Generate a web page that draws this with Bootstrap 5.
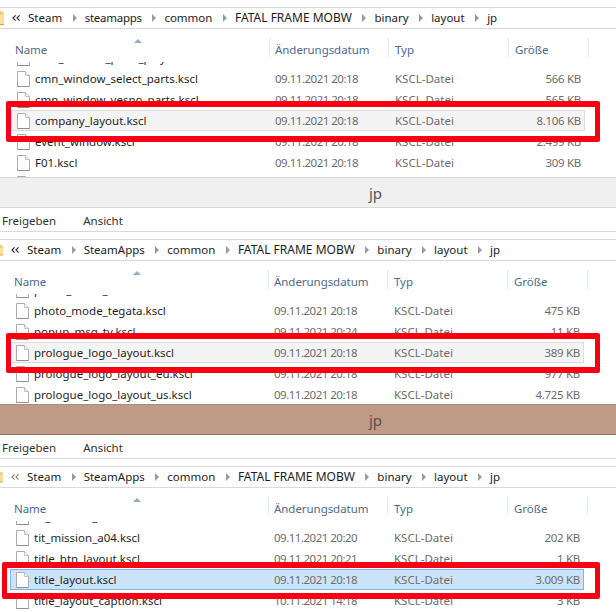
<!DOCTYPE html>
<html lang="de"><head><meta charset="utf-8">
<link href="https://cdn.jsdelivr.net/npm/bootstrap@5.3.0/dist/css/bootstrap.min.css" rel="stylesheet">
<style>
html,body{margin:0;background:#fff}
body{width:616px;height:612px;overflow:hidden;font-family:"Noto Sans","Open Sans",sans-serif;font-size:11.5px;color:#1f1f1f;line-height:1;position:relative}
.win{position:relative}
.gap7{height:7px}
.sep{height:1px;background:#d9d9d9}
.crumbs{height:20px}
.crumb{font-size:11.5px;color:#1c1c1c;white-space:nowrap}
.crumb-wide{font-size:12px}
.crumb-tight{letter-spacing:-.25px}
.folder{width:4px;height:14px;margin-right:8px;flex:none}
.dbl{width:8px;height:6px;margin-right:8px;flex:none;stroke:#333;fill:none;stroke-width:1.2}
.p3 .dbl{stroke:#8a8a8a}
.chev{width:4px;height:8px;margin:0 8px 0 10.5px;flex:none;fill:#9b9b9b}
.headrow{height:33px;position:relative}
.hd{position:absolute;top:21px;color:#4f6a8c;transform:translateY(-50%);letter-spacing:-.05px}
.hd1{left:15px}.hd2{left:275px}.hd3{left:395px}.hd4{left:515px}
.sepv{position:absolute;top:8px;height:21px;width:1px;background:linear-gradient(#e9eff6,#d9e4ef 50%,#f0f4f9)}
.sv1{left:269px}.sv2{left:388px}.sv3{left:508px}.sv4{left:588px}
.sorter{position:absolute;top:10px;left:134px;width:8px;height:4px;fill:#93accb}
.listarea{overflow:hidden;position:relative}
.a1{height:115px}.a2{height:110px}.a3{height:91px}
.frow{height:21px;position:relative;margin:0 31px 0 11px;border:1px solid transparent;color:#6d6d6d;white-space:nowrap}
.frow:first-child{margin-top:-15px}
.frow>span{position:absolute;top:50%;transform:translateY(-50%)}
.ico{position:absolute;left:5px;top:2px;width:13px;height:16px;display:block}
.frow .nm{left:23px;color:#1f1f1f}
.frow .dt{left:263px;letter-spacing:-.5px}
.frow .ty{left:383px}
.frow .sz{right:3px;letter-spacing:-.3px}
.frow.hot{background:#f4f4f4;border-color:#dcdcdc}
.frow.sel{background:#cce4fa;border-color:#7eb4ea}
.p2 .frow,.p3 .frow{margin-left:10px;margin-right:32px}
.p2 .headrow,.p3 .headrow{margin-left:-1px}
.p2 .crumbs,.p3 .crumbs{margin-left:-1px}
.p2 .folder,.p3 .folder{margin-left:1px;width:3px}
.band{height:30px;background:#f0f0f0;color:#555;font-size:15px;position:relative;border-top:1px solid #d6d6d6}
.band.brown{background:#bf9a87;color:#5a5048;border-top:1px solid #ad8b7a;border-bottom:1px solid #8f7262;height:31px}
.band span{position:absolute;left:369px;top:50%;transform:translateY(-50%)}
.tools{height:23px;color:#333;padding:2px 0 0 2px;gap:27px}
.redbox{position:absolute;border:solid #f70014;border-width:6px 5px;border-radius:2px}
.r1{left:6px;top:101px;width:594px;height:41px}
.r2{left:6px;top:333px;width:594px;height:40px}
.r3{left:2px;top:562px;width:598px;height:37px}
</style></head><body>
<svg width="0" height="0" class="position-absolute"><defs>
<symbol id="fi" viewBox="0 0 13 16"><path d="M.5.5h8l4 4v11H.5z" fill="#fff" stroke="#adadad"/><path d="M8.5.5v4h4" fill="#f0f0f0" stroke="#c2c2c2"/><path d="M.5 15.5h12" stroke="#8f8f8f"/></symbol>
<symbol id="ch" viewBox="0 0 4 8"><path d="M0 0l4 4-4 4z"/></symbol>
<symbol id="fo" viewBox="0 0 4 14"><path d="M0 0h2l2 2v12H0z" fill="#f0d27a"/><path d="M0 4h4v10H0z" fill="#f6e09a"/><path d="M0 13.5h4" stroke="#c9a548"/></symbol>
<symbol id="dbl" viewBox="0 0 8 6"><path d="M3.6.4 1 3l2.6 2.6M7.6.4 5 3l2.6 2.6"/></symbol>
</defs></svg>

<section class="win p1">
 <div class="gap7"></div><div class="sep"></div>
 <nav class="crumbs d-flex align-items-center">
  <svg class="folder"><use href="#fo"/></svg><svg class="dbl"><use href="#dbl"/></svg>
  <span class="crumb">Steam</span><svg class="chev"><use href="#ch"/></svg><span class="crumb crumb-tight">steamapps</span><svg class="chev"><use href="#ch"/></svg><span class="crumb">common</span><svg class="chev"><use href="#ch"/></svg><span class="crumb crumb-wide">FATAL FRAME MOBW</span><svg class="chev"><use href="#ch"/></svg><span class="crumb">binary</span><svg class="chev"><use href="#ch"/></svg><span class="crumb">layout</span><svg class="chev"><use href="#ch"/></svg><span class="crumb">jp</span>
 </nav>
 <div class="sep"></div>
 <div class="headrow">
  <svg class="sorter"><path d="M0 4l4-4 4 4z"/></svg>
  <span class="hd hd1">Name</span><i class="sepv sv1"></i>
  <span class="hd hd2">Änderungsdatum</span><i class="sepv sv2"></i>
  <span class="hd hd3">Typ</span><i class="sepv sv3"></i>
  <span class="hd hd4">Größe</span><i class="sepv sv4"></i>
 </div>
 <div class="listarea a1">
  <div class="frow"><svg class="ico"><use href="#fi"/></svg><span class="nm">cmn_window_parts_play.kscl</span></div>
  <div class="frow"><svg class="ico"><use href="#fi"/></svg><span class="nm">cmn_window_select_parts.kscl</span><span class="dt">09.11.2021 20:18</span><span class="ty">KSCL-Datei</span><span class="sz">566 KB</span></div>
  <div class="frow"><svg class="ico"><use href="#fi"/></svg><span class="nm">cmn_window_yesno_parts.kscl</span><span class="dt">09.11.2021 20:18</span><span class="ty">KSCL-Datei</span><span class="sz">565 KB</span></div>
  <div class="frow hot"><svg class="ico"><use href="#fi"/></svg><span class="nm">company_layout.kscl</span><span class="dt">09.11.2021 20:18</span><span class="ty">KSCL-Datei</span><span class="sz">8.106 KB</span></div>
  <div class="frow"><svg class="ico"><use href="#fi"/></svg><span class="nm">event_window.kscl</span><span class="dt">09.11.2021 20:18</span><span class="ty">KSCL-Datei</span><span class="sz">2.499 KB</span></div>
  <div class="frow"><svg class="ico"><use href="#fi"/></svg><span class="nm">F01.kscl</span><span class="dt">09.11.2021 20:18</span><span class="ty">KSCL-Datei</span><span class="sz">309 KB</span></div>
  <div class="frow"><svg class="ico"><use href="#fi"/></svg></div>
 </div>
 <div class="band"><span>jp</span></div>
 <div class="sep"></div>
</section>

<section class="win p2">
 <div class="tools d-flex align-items-center"><span>Freigeben</span><span>Ansicht</span></div>
 <div class="sep"></div><div class="gap7"></div><div class="sep"></div>
 <nav class="crumbs d-flex align-items-center">
  <svg class="folder"><use href="#fo"/></svg><svg class="dbl"><use href="#dbl"/></svg>
  <span class="crumb">Steam</span><svg class="chev"><use href="#ch"/></svg><span class="crumb">SteamApps</span><svg class="chev"><use href="#ch"/></svg><span class="crumb">common</span><svg class="chev"><use href="#ch"/></svg><span class="crumb crumb-wide">FATAL FRAME MOBW</span><svg class="chev"><use href="#ch"/></svg><span class="crumb">binary</span><svg class="chev"><use href="#ch"/></svg><span class="crumb">layout</span><svg class="chev"><use href="#ch"/></svg><span class="crumb">jp</span>
 </nav>
 <div class="sep"></div>
 <div class="headrow">
  <svg class="sorter"><path d="M0 4l4-4 4 4z"/></svg>
  <span class="hd hd1">Name</span><i class="sepv sv1"></i>
  <span class="hd hd2">Änderungsdatum</span><i class="sepv sv2"></i>
  <span class="hd hd3">Typ</span><i class="sepv sv3"></i>
  <span class="hd hd4">Größe</span><i class="sepv sv4"></i>
 </div>
 <div class="listarea a2">
  <div class="frow"><svg class="ico"><use href="#fi"/></svg><span class="nm">photo_mode_main.kscl</span></div>
  <div class="frow"><svg class="ico"><use href="#fi"/></svg><span class="nm">photo_mode_tegata.kscl</span><span class="dt">09.11.2021 20:18</span><span class="ty">KSCL-Datei</span><span class="sz">475 KB</span></div>
  <div class="frow"><svg class="ico"><use href="#fi"/></svg><span class="nm">popup_msg_tv.kscl</span><span class="dt">09.11.2021 20:24</span><span class="ty">KSCL-Datei</span><span class="sz">11 KB</span></div>
  <div class="frow hot"><svg class="ico"><use href="#fi"/></svg><span class="nm">prologue_logo_layout.kscl</span><span class="dt">09.11.2021 20:18</span><span class="ty">KSCL-Datei</span><span class="sz">389 KB</span></div>
  <div class="frow"><svg class="ico"><use href="#fi"/></svg><span class="nm">prologue_logo_layout_eu.kscl</span><span class="dt">09.11.2021 20:18</span><span class="ty">KSCL-Datei</span><span class="sz">977 KB</span></div>
  <div class="frow"><svg class="ico"><use href="#fi"/></svg><span class="nm">prologue_logo_layout_us.kscl</span><span class="dt">09.11.2021 20:18</span><span class="ty">KSCL-Datei</span><span class="sz">4.725 KB</span></div>
 </div>
 <div class="band brown"><span>jp</span></div>
</section>

<section class="win p3">
 <div class="tools d-flex align-items-center"><span>Freigeben</span><span>Ansicht</span></div>
 <div class="sep"></div><div class="gap7"></div><div class="sep"></div>
 <nav class="crumbs d-flex align-items-center">
  <svg class="folder"><use href="#fo"/></svg><svg class="dbl"><use href="#dbl"/></svg>
  <span class="crumb">Steam</span><svg class="chev"><use href="#ch"/></svg><span class="crumb">SteamApps</span><svg class="chev"><use href="#ch"/></svg><span class="crumb">common</span><svg class="chev"><use href="#ch"/></svg><span class="crumb crumb-wide">FATAL FRAME MOBW</span><svg class="chev"><use href="#ch"/></svg><span class="crumb">binary</span><svg class="chev"><use href="#ch"/></svg><span class="crumb">layout</span><svg class="chev"><use href="#ch"/></svg><span class="crumb">jp</span>
 </nav>
 <div class="sep"></div>
 <div class="headrow">
  <svg class="sorter"><path d="M0 4l4-4 4 4z"/></svg>
  <span class="hd hd1">Name</span><i class="sepv sv1"></i>
  <span class="hd hd2">Änderungsdatum</span><i class="sepv sv2"></i>
  <span class="hd hd3">Typ</span><i class="sepv sv3"></i>
  <span class="hd hd4">Größe</span><i class="sepv sv4"></i>
 </div>
 <div class="listarea a3">
  <div class="frow"><svg class="ico"><use href="#fi"/></svg><span class="nm">tit_mission_a03.kscl</span></div>
  <div class="frow"><svg class="ico"><use href="#fi"/></svg><span class="nm">tit_mission_a04.kscl</span><span class="dt">09.11.2021 20:20</span><span class="ty">KSCL-Datei</span><span class="sz">202 KB</span></div>
  <div class="frow"><svg class="ico"><use href="#fi"/></svg><span class="nm">title_btn_layout.kscl</span><span class="dt">09.11.2021 20:21</span><span class="ty">KSCL-Datei</span><span class="sz">1 KB</span></div>
  <div class="frow sel"><svg class="ico"><use href="#fi"/></svg><span class="nm">title_layout.kscl</span><span class="dt">09.11.2021 20:18</span><span class="ty">KSCL-Datei</span><span class="sz">3.009 KB</span></div>
  <div class="frow"><svg class="ico"><use href="#fi"/></svg><span class="nm">title_layout_caption.kscl</span><span class="dt">10.11.2021 14:18</span><span class="ty">KSCL-Datei</span><span class="sz">3 KB</span></div>
 </div>
</section>

<div class="redbox r1"></div><div class="redbox r2"></div><div class="redbox r3"></div>
</body></html>
